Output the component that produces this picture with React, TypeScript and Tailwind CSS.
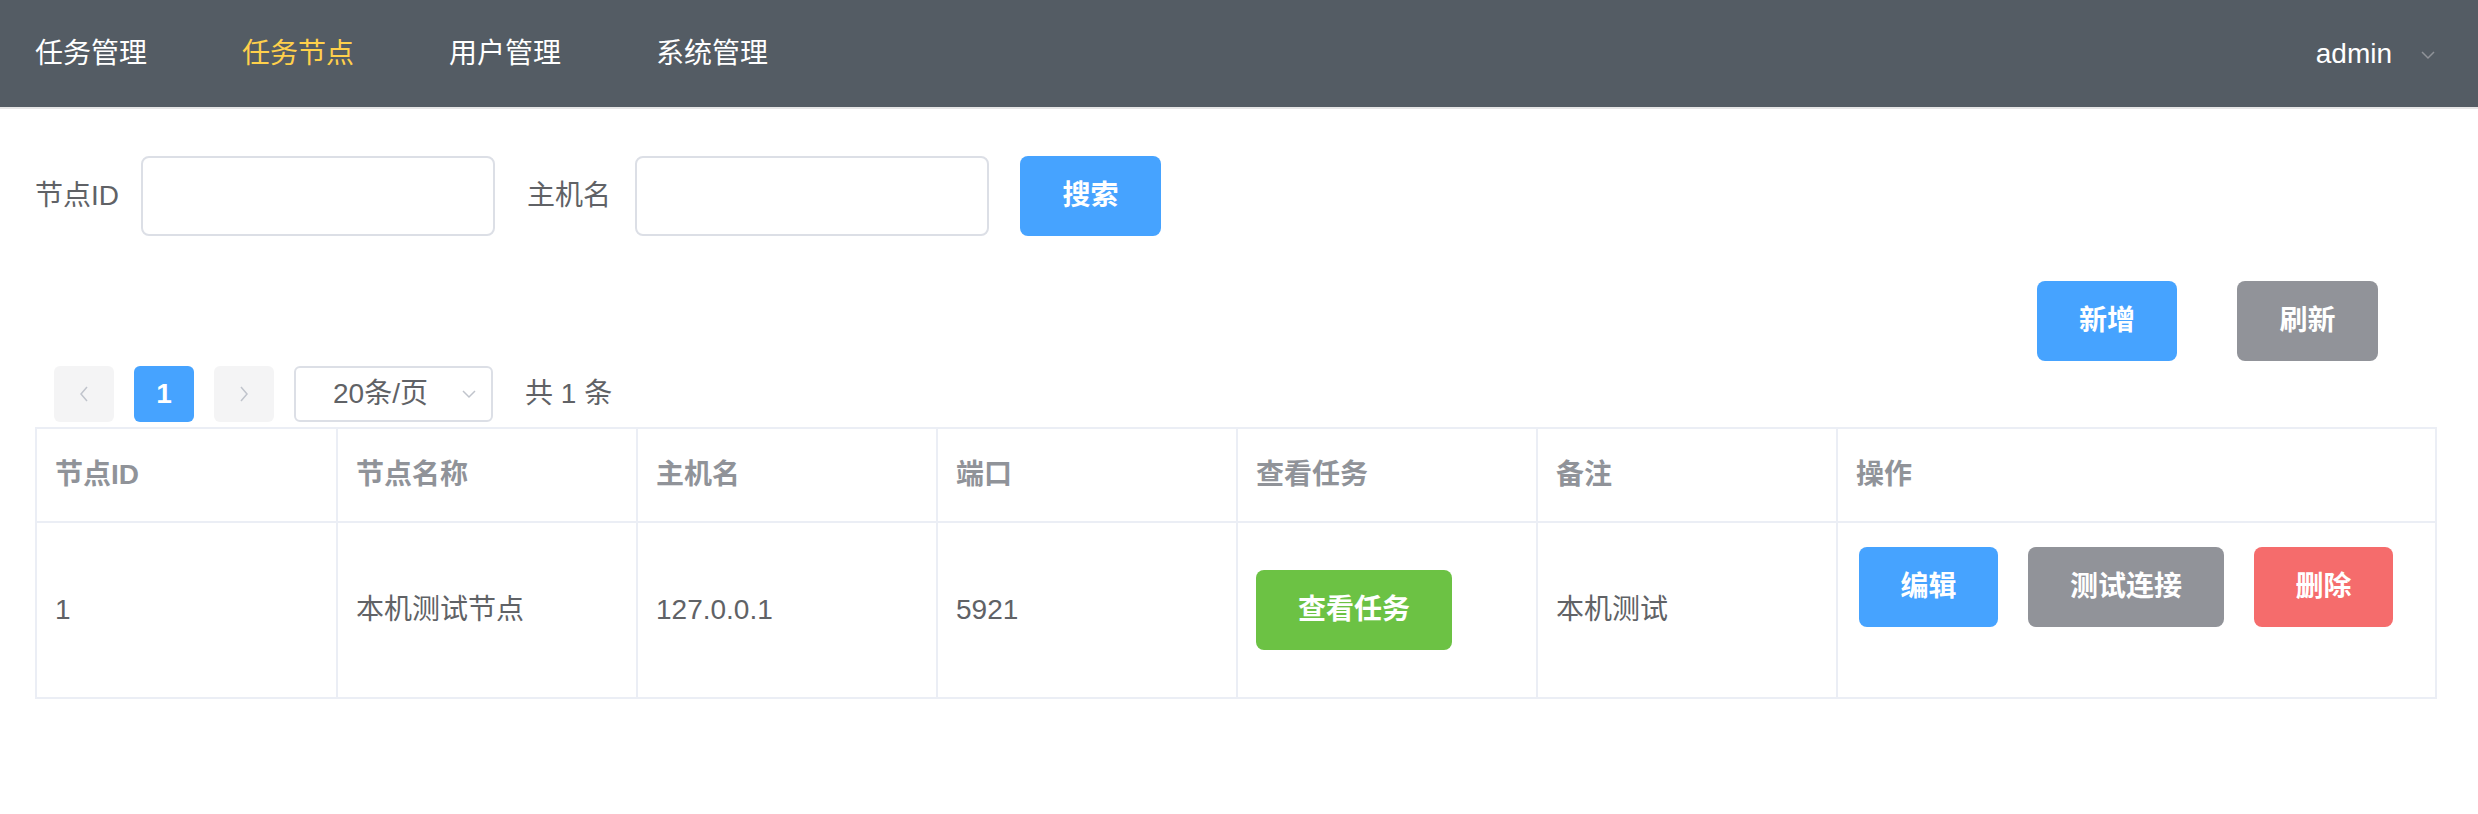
import React from 'react';

const font = { fontFamily: '"Liberation Sans", "Noto Sans CJK SC", sans-serif' };

const navItems = ['任务管理', '任务节点', '用户管理', '系统管理'];

const columns = ['节点ID', '节点名称', '主机名', '端口', '查看任务', '备注', '操作'];

const nodes = [
    { id: 1, name: '本机测试节点', host: '127.0.0.1', port: 5921, remark: '本机测试' }
];

function Chevron({ dir, className }: { dir: 'left' | 'right' | 'down'; className?: string }) {
    const points = dir === 'left' ? '9,2 3,9 9,16' : dir === 'right' ? '3,2 9,9 3,16' : '2,4 8,10 14,4';
    const size = dir === 'down' ? { w: 16, h: 14 } : { w: 12, h: 18 };
    return (
        <svg width={size.w} height={size.h} viewBox={`0 0 ${size.w} ${size.h}`} className={className} fill="none">
            <polyline points={points} stroke="currentColor" strokeWidth="1.5" />
        </svg>
    );
}

function Btn({ children, color, className = '' }: { children: React.ReactNode; color: string; className?: string }) {
    return (
        <button className={`h-[80px] rounded-[8px] text-white text-[28px] font-semibold ${color} ${className}`}>
            {children}
        </button>
    );
}

export default function App() {
    const cell = 'border-r-2 border-[#ebeef5] last:border-r-0 px-[18px]';

    return (
        <div className="w-[2478px] min-h-[814px] bg-white" style={font}>
            {/* Top nav */}
            <header className="h-[109px] bg-[#545c64] border-b-2 border-[#e6e6e6] flex items-center justify-between pl-[35px] pr-[42px]">
                <nav className="flex items-center gap-[95px] text-[28px]">
                    {navItems.map((n, i) => (
                        <span key={n} className={i === 1 ? 'text-[#ffd04b]' : 'text-white'}>{n}</span>
                    ))}
                </nav>
                <div className="flex items-center gap-[28px] text-white text-[28px]">
                    <span>admin</span>
                    <Chevron dir="down" className="text-[#909399] mt-[2px]" />
                </div>
            </header>

            <main className="pl-[35px] pr-[41px]">
                {/* Search */}
                <div className="flex items-center mt-[47px] text-[28px] text-[#606266]">
                    <span className="mr-[22px]">节点ID</span>
                    <input className="w-[354px] h-[80px] rounded-[8px] border-2 border-[#dcdfe6] outline-none" />
                    <span className="ml-[32px] mr-[24px]">主机名</span>
                    <input className="w-[354px] h-[80px] rounded-[8px] border-2 border-[#dcdfe6] outline-none" />
                    <Btn color="bg-[#46a3ff]" className="w-[141px] ml-[31px]">搜索</Btn>
                </div>

                {/* Actions */}
                <div className="flex justify-end gap-[60px] pr-[59px] mt-[45px]">
                    <Btn color="bg-[#46a3ff]" className="w-[140px]">新增</Btn>
                    <Btn color="bg-[#919399]" className="w-[141px]">刷新</Btn>
                </div>

                {/* Pagination */}
                <div className="flex items-center mt-[5px] pl-[19px] text-[28px] text-[#606266]">
                    <div className="w-[60px] h-[56px] rounded-[6px] bg-[#f4f4f5] flex items-center justify-center text-[#c0c4cc]">
                        <Chevron dir="left" />
                    </div>
                    <div className="w-[60px] h-[56px] ml-[20px] rounded-[6px] bg-[#46a3ff] text-white font-bold flex items-center justify-center">1</div>
                    <div className="w-[60px] h-[56px] ml-[20px] rounded-[6px] bg-[#f4f4f5] flex items-center justify-center text-[#c0c4cc]">
                        <Chevron dir="right" />
                    </div>
                    <div className="w-[199px] h-[56px] ml-[20px] rounded-[6px] border-2 border-[#dcdfe6] flex items-center justify-between pl-[37px] pr-[14px]">
                        <span>20条/页</span>
                        <Chevron dir="down" className="text-[#c0c4cc]" />
                    </div>
                    <span className="ml-[32px]">共 1 条</span>
                </div>

                {/* Table */}
                <div className="mt-[5px] border-2 border-[#ebeef5] text-[28px]">
                    <div className="grid grid-cols-[301px_300px_300px_300px_300px_300px_1fr] h-[94px] border-b-2 border-[#ebeef5] text-[#909399] font-bold">
                        {columns.map(c => (
                            <div key={c} className={`${cell} flex items-center`}>{c}</div>
                        ))}
                    </div>
                    {nodes.map(n => (
                        <div key={n.id} className="grid grid-cols-[301px_300px_300px_300px_300px_300px_1fr] h-[174px] text-[#606266]">
                            <div className={`${cell} flex items-center`}>{n.id}</div>
                            <div className={`${cell} flex items-center`}>{n.name}</div>
                            <div className={`${cell} flex items-center`}>{n.host}</div>
                            <div className={`${cell} flex items-center`}>{n.port}</div>
                            <div className={`${cell} flex items-center`}>
                                <Btn color="bg-[#6cc244]" className="w-[196px]">查看任务</Btn>
                            </div>
                            <div className={`${cell} flex items-center`}>{n.remark}</div>
                            <div className={`${cell} flex items-start pt-[24px] pl-[21px] gap-[30px]`}>
                                <Btn color="bg-[#46a3ff]" className="w-[139px]">编辑</Btn>
                                <Btn color="bg-[#919399]" className="w-[196px]">测试连接</Btn>
                                <Btn color="bg-[#f56c6c]" className="w-[139px]">删除</Btn>
                            </div>
                        </div>
                    ))}
                </div>
            </main>
        </div>
    );
}
